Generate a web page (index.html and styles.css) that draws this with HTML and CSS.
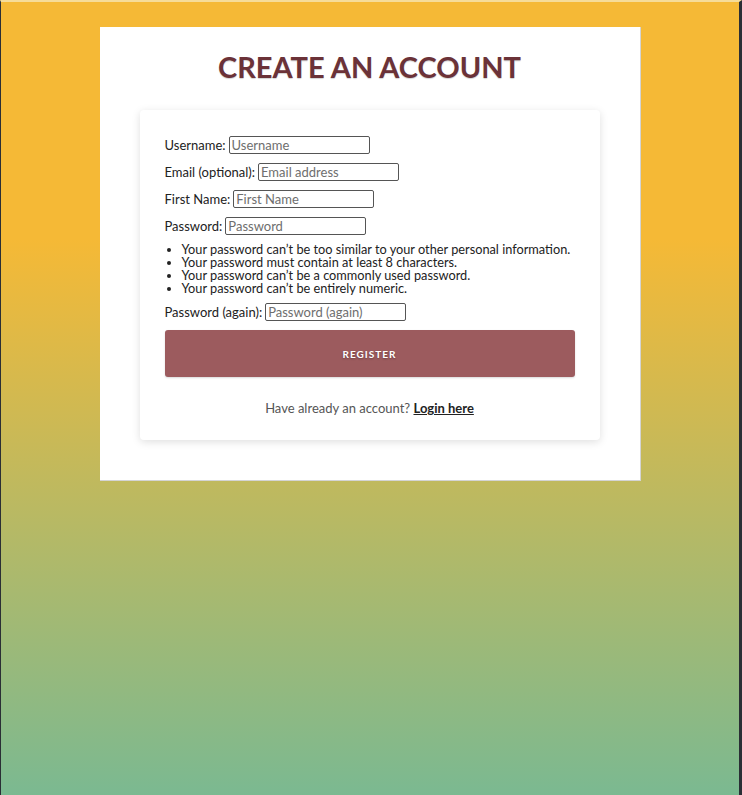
FILE: index.html
```html
<!DOCTYPE html>
<html lang="en">
<head>
<meta charset="utf-8">
<title>Create an account</title>
<link rel="stylesheet" href="styles.css">
</head>
<body>
<div class="page">
  <main class="card">
    <h1 class="title">CREATE AN ACCOUNT</h1>
    <form class="form-box">
      <div class="row"><label for="u">Username:</label><input id="u" class="field" type="text" placeholder="Username"></div>
      <div class="row"><label for="e">Email (optional):</label><input id="e" class="field" type="text" placeholder="Email address"></div>
      <div class="row"><label for="f">First Name:</label><input id="f" class="field" type="text" placeholder="First Name"></div>
      <div class="row"><label for="p">Password:</label><input id="p" class="field" type="password" placeholder="Password"></div>
      <ul class="help">
        <li>Your password can’t be too similar to your other personal information.</li>
        <li>Your password must contain at least 8 characters.</li>
        <li>Your password can’t be a commonly used password.</li>
        <li>Your password can’t be entirely numeric.</li>
      </ul>
      <div class="row"><label for="p2">Password (again):</label><input id="p2" class="field" type="password" placeholder="Password (again)"></div>
      <button class="btn" type="button">REGISTER</button>
      <p class="foot">Have already an account? <a class="link" href="#">Login here</a></p>
    </form>
  </main>
</div>
</body>
</html>
```
FILE: styles.css
```css
html {
  background: #2a2e35;
}
body {
  margin: 0;
  font-family: Lato, "Open Sans", sans-serif;
}
.page {
  min-height: 795px;
  box-sizing: border-box;
  border-left: 1px solid #2a2e35;
  border-right: 3px solid #2a2e35;
  border-top: 2px solid #f6dc98;
  padding-top: 25px;
  background: linear-gradient(to bottom, #f5b936 0%, #f5b936 30%, #7bb991 100%);
}
.card {
  box-sizing: border-box;
  width: 541px;
  margin: 0 auto;
  background: #fff;
  border-right: 1px solid #d4d4d4;
  border-bottom: 1px solid #d4d4d4;
  padding: 22px 40px 40px;
}
.title {
  margin: 0 0 25px;
  font-size: 29px;
  line-height: 36px;
  font-weight: 700;
  color: #6b3238;
  text-align: center;
  text-shadow: 0 1px 1px rgba(0,0,0,0.18);
}
.form-box {
  width: 460px;
  box-sizing: border-box;
  margin: 0 auto;
  background: #fff;
  border-radius: 4px;
  box-shadow: 0 2px 8px rgba(0,0,0,0.13);
  padding: 26px 25px 24px;
  font-size: 13px;
  color: #222;
}
.row {
  display: flex;
  align-items: center;
  gap: 3px;
  height: 18px;
  margin-bottom: 9px;
}
.field {
  box-sizing: border-box;
  width: 141px;
  height: 18px;
  margin: 0;
  padding: 0 2px;
  border: 1px solid #555;
  border-radius: 2px;
  font-family: Lato, sans-serif;
  font-size: 13px;
  color: #222;
}
.field::placeholder {
  color: #6e6e6e;
}
.help {
  margin: -1px 0 8px;
  padding-left: 17px;
  font-size: 12.75px;
  line-height: 13px;
  white-space: nowrap;
}
.btn {
  display: block;
  width: 100%;
  height: 47px;
  margin: 0;
  border: none;
  border-radius: 3px;
  background: #9c5b5e;
  color: #fff;
  font-family: Lato, sans-serif;
  font-size: 10px;
  font-weight: 700;
  letter-spacing: 1px;
  text-shadow: 0 1px 2px rgba(0,0,0,0.3);
  box-shadow: 0 1px 2px rgba(0,0,0,0.15);
}
.foot {
  margin: 23px 0 0;
  line-height: 16px;
  text-align: center;
  color: #555;
}
.link {
  color: #222;
  font-weight: 700;
  text-decoration: underline;
}
```
